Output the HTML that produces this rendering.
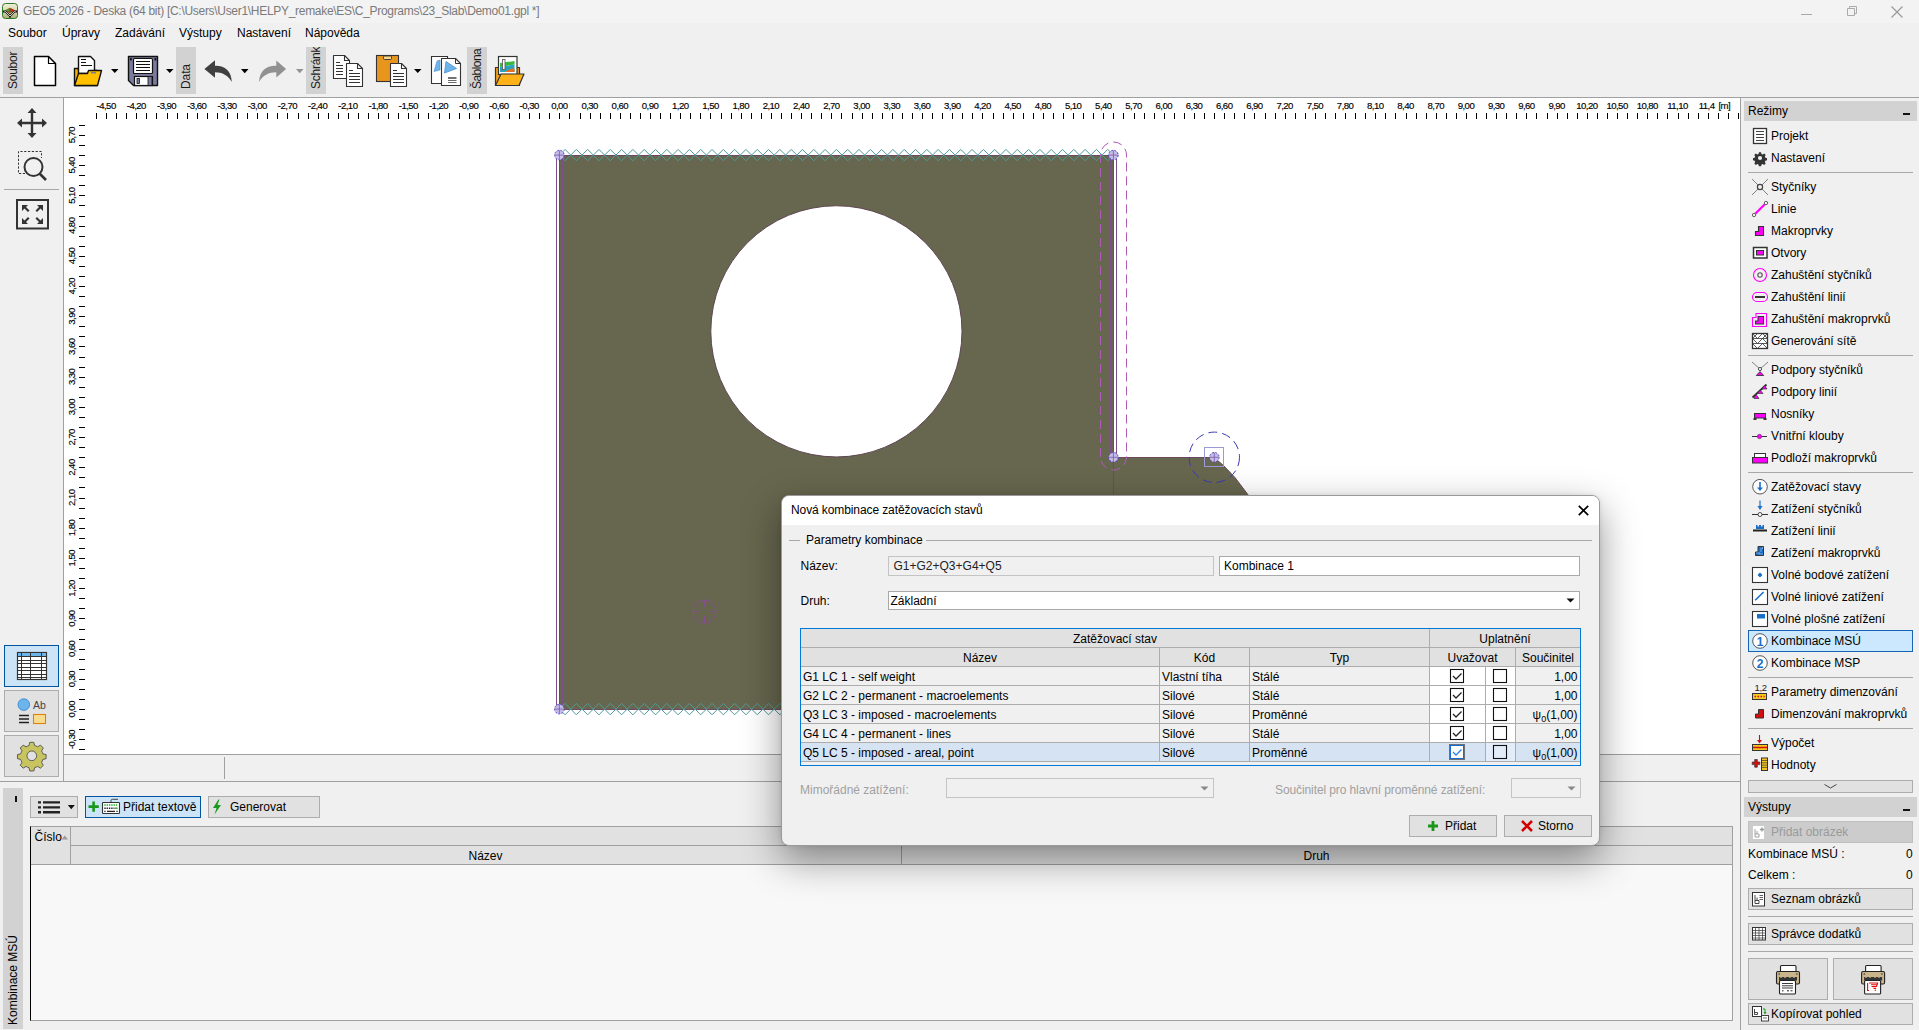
<!DOCTYPE html><html><head><meta charset="utf-8"><style>
*{box-sizing:border-box;margin:0;padding:0}
html,body{width:1919px;height:1030px;overflow:hidden;background:#f0f0f0;font-family:"Liberation Sans", sans-serif;font-size:12px;color:#000;position:relative}
.a{position:absolute}
.t{position:absolute;white-space:nowrap;line-height:14px}
.hl{position:absolute;height:1px;background:#a0a0a0}
.vl{position:absolute;width:1px;background:#a0a0a0}
svg{overflow:visible}
</style></head><body>
<div class="a" style="left:0;top:0;width:1919px;height:23px;background:#f3f3f3"></div>
<div class="t" style="left:23px;top:4px;color:#7a7a7a;letter-spacing:-0.3px">GEO5 2026 - Deska (64 bit) [C:\Users\User1\HELPY_remake\ES\C_Programs\23_Slab\Demo01.gpl *]</div>
<svg class="a" style="left:2px;top:3px" width="17" height="16" viewBox="0 0 17 16">
<defs><linearGradient id="ig" x1="0" y1="0" x2="0" y2="1"><stop offset="0" stop-color="#f0eed8"/><stop offset="0.5" stop-color="#d8d8b0"/><stop offset="1" stop-color="#a8b070"/></linearGradient></defs>
<rect x="0.5" y="0.5" width="15" height="15" rx="3" fill="url(#ig)" stroke="#2f7a2a" stroke-width="1"/>
<path d="M3 7.5L8 4.8L13 7.5L8 10.2Z" fill="#8a5020"/><path d="M3 7.5L6.5 5.6L7.5 8.5Z" fill="#5a9a30"/><path d="M13 7.5L9.5 5.6L9 8.8Z" fill="#d02020"/>
<path d="M1 8.5H3.5L8 13L12.5 8.5H15" fill="none" stroke="#111" stroke-width="1.8"/><path d="M2.5 8.5H3.5L8 13L12.5 8.5H13.5" fill="none" stroke="#fff" stroke-width="0.8"/>
<path d="M8 13V15" stroke="#111" stroke-width="1.2"/>
</svg>
<div class="a" style="left:1801px;top:14px;width:11px;height:1px;background:#aaa"></div>
<svg class="a" style="left:1846px;top:5px" width="12" height="12"><path d="M1.5 3.5h7v7h-7z M3.5 3.5v-2h7v7h-2" fill="none" stroke="#aaa"/></svg>
<svg class="a" style="left:1891px;top:6px" width="12" height="12"><path d="M0.5 0.5L11.5 11.5M11.5 0.5L0.5 11.5" stroke="#999" stroke-width="1.2"/></svg>
<div class="t" style="left:8px;top:26px">Soubor</div>
<div class="t" style="left:62px;top:26px">Úpravy</div>
<div class="t" style="left:115px;top:26px">Zadávání</div>
<div class="t" style="left:179px;top:26px">Výstupy</div>
<div class="t" style="left:237px;top:26px">Nastavení</div>
<div class="t" style="left:305px;top:26px">Nápověda</div>
<div class="a" style="left:3px;top:47px;width:20px;height:47px;background:#d2d2d2;overflow:hidden"><div class="t" style="left:2.8px;top:42px;transform-origin:0 0;transform:rotate(-90deg);color:#1a1a1a;letter-spacing:-0.25px">Soubor</div></div>
<div class="a" style="left:176px;top:47px;width:20px;height:47px;background:#d2d2d2;overflow:hidden"><div class="t" style="left:2.8px;top:42px;transform-origin:0 0;transform:rotate(-90deg);color:#1a1a1a;letter-spacing:-0.1px">Data</div></div>
<div class="a" style="left:306px;top:47px;width:20px;height:47px;background:#d2d2d2;overflow:hidden"><div class="t" style="left:2.8px;top:42px;transform-origin:0 0;transform:rotate(-90deg);color:#1a1a1a;letter-spacing:-0.25px">Schránk</div></div>
<div class="a" style="left:467px;top:47px;width:20px;height:47px;background:#d2d2d2;overflow:hidden"><div class="t" style="left:2.8px;top:42px;transform-origin:0 0;transform:rotate(-90deg);color:#1a1a1a;letter-spacing:-0.55px">Šablona</div></div>
<svg class="a" style="left:0;top:0" width="560" height="97">
<g stroke="#000" stroke-width="1.5" stroke-linejoin="round">
<path d="M34.5 56.5H48.5L55.5 63.5V85.5H34.5Z" fill="#fff"/>
<path d="M48.5 56.5V63.5H55.5" fill="none" stroke-width="1.2"/>
</g>
<g stroke="#111" stroke-width="1.4" stroke-linejoin="round">
<path d="M74.5 85.5V68.5H78.5V70.5H97V85.5Z" fill="#f4b400"/>
<path d="M78.5 73.5V56.5H90.5L94.5 60.5V73.5Z" fill="#fff"/>
</g>
<g stroke="#111" stroke-width="1.2"><path d="M81 59.5H86M81 62.5H86M81 65.5H92" /></g>
<path d="M74.5 85.5L78.5 73.5H87.5L88.5 70.5H101.5L97.5 85.5Z" fill="#ffc000" stroke="#111" stroke-width="1.4" stroke-linejoin="round"/>
<rect x="91" y="72" width="5" height="1.5" fill="#7b7b9e"/>
<path d="M111 69H118.5L114.75 73Z" fill="#000"/>
<path d="M128.5 56.5H157.5V85.5H133.5L128.5 80.5Z" fill="#7b7b9e" stroke="#111" stroke-width="1.4" stroke-linejoin="round"/>
<rect x="133.5" y="58.5" width="19" height="15" rx="1" fill="#fff" stroke="#111" stroke-width="1.2"/>
<path d="M136 61.5H150M136 64.5H150M136 67.5H150M136 70.5H150" stroke="#111" stroke-width="1"/>
<rect x="134.5" y="76.5" width="18" height="9" fill="#fff" stroke="#111" stroke-width="1.2"/>
<rect x="137" y="78.5" width="2.5" height="5" fill="#7b7b9e" stroke="#111" stroke-width="0.8"/>
<rect x="148" y="76.5" width="4" height="9" fill="#7b7b9e" stroke="#111" stroke-width="0.8"/>
<rect x="130" y="58" width="1.8" height="2.5" fill="#111"/><rect x="154.5" y="58" width="1.8" height="2.5" fill="#111"/>
<path d="M166 69H173.5L169.75 73Z" fill="#000"/>
<path d="M204.4 69L215 60.2V65.7C224 65.2 231.5 70 231.8 82.1C228.5 75.5 222 72.3 215 72.3V77.7Z" fill="#404040"/>
<path d="M241 69H248.5L244.75 73.2Z" fill="#000"/>
<path d="M286.1 69L276.3 60.5V65.7C267 65.2 259.4 70 259.1 82.1C262.4 75.5 269 72.3 276.3 72.3V77.5Z" fill="#919191"/>
<path d="M296 69H303.5L299.75 73.2Z" fill="#939393"/>
<g stroke="#333" stroke-width="1.1" stroke-linejoin="round">
<path d="M333.5 55.5H344.5L349.5 60.5V78.5H333.5Z" fill="#fff"/>
<path d="M344.5 55.5V60.5H349.5" fill="none"/>
</g>
<path d="M336 62.5H340M336 65.5H343M336 68.5H343M336 71.5H343M336 74.5H343" stroke="#333" stroke-width="1"/>
<g stroke="#333" stroke-width="1.1" stroke-linejoin="round">
<path d="M346.5 63.5H357.5L362.5 68.5V86.5H346.5Z" fill="#fff"/>
<path d="M357.5 63.5V68.5H362.5" fill="none"/>
</g>
<path d="M349 70.5H353M349 73.5H360M349 76.5H360M349 79.5H360M349 82.5H360" stroke="#333" stroke-width="1"/>
<rect x="376.5" y="55.5" width="22" height="26" fill="#e8951f" stroke="#333" stroke-width="1.1"/>
<rect x="383.5" y="56" width="8" height="3.5" rx="1" fill="#f8d888" stroke="#333" stroke-width="0.9"/>
<g stroke="#333" stroke-width="1.1" stroke-linejoin="round">
<path d="M390.5 63.5H401.5L406.5 68.5V86.5H390.5Z" fill="#fff"/>
<path d="M401.5 63.5V68.5H406.5" fill="none"/>
</g>
<path d="M393 70.5H397M393 73.5H404M393 76.5H404M393 79.5H404M393 82.5H404" stroke="#333" stroke-width="1"/>
<path d="M414 69H421.5L417.75 73Z" fill="#000"/>
<path d="M431.5 56.5H447.5V83.5H431.5Z" fill="#fff" stroke="#333" stroke-width="1.1"/>
<path d="M437 61L440 60V70L434 71.5Z" fill="#6cb4ec" stroke="#4a90d0" stroke-width="0.6"/>
<path d="M441.5 58.5H455.5L460.5 63.5V85.5H441.5Z" fill="#fff" stroke="#333" stroke-width="1.1" stroke-linejoin="round"/>
<path d="M455.5 58.5V63.5H460.5" fill="none" stroke="#333" stroke-width="1"/>
<path d="M446 61.5L456.5 68.5L444.5 73Z" fill="#6cb4ec" stroke="#4a90d0" stroke-width="0.8"/>
<path d="M448 78H456.5" stroke="#444" stroke-width="1.5"/><path d="M448 80.5H456.5M448 82.5H456.5" stroke="#444" stroke-width="0.8"/>
<path d="M495.5 85.5V67.5H519.5V85.5Z" fill="#f4a01a" stroke="#333" stroke-width="1.2" stroke-linejoin="round"/>
<rect x="498.5" y="56.5" width="18.5" height="18" fill="#fff" stroke="#333" stroke-width="1.2"/>
<path d="M500 63L514.5 61V64.5L500 67Z" fill="#3cb83c"/>
<path d="M500 67L514.5 64.5V72L500 72Z" fill="#26a4c0"/>
<path d="M505 72C508 69.5 511 68.5 514.5 68.5V72Z" fill="#e8701e"/>
<rect x="502.5" y="59.5" width="2.5" height="10" fill="#fff" stroke="#555" stroke-width="0.8"/>
<path d="M495.5 85.5L501 74H524L519 85.5Z" fill="#ffb11a" stroke="#333" stroke-width="1.2" stroke-linejoin="round"/>
</svg>
<div class="hl" style="left:0;top:97px;width:1919px"></div>
<div class="vl" style="left:63px;top:98px;height:684px"></div>
<div class="hl" style="left:0;top:781px;width:1741px"></div>
<div class="hl" style="left:64px;top:754px;width:1676px"></div>
<div class="vl" style="left:1740px;top:98px;height:932px"></div>
<svg class="a" style="left:0;top:98px" width="63" height="683" viewBox="0 98 63 683">
<g fill="#333">
<path d="M32 108L36.5 113H33.2V121.8H42V118.5L47 123L42 127.5V124.2H33.2V133H36.5L32 138L27.5 133H30.8V124.2H22V127.5L17 123L22 118.5V121.8H30.8V113H27.5Z"/>
</g>
<path d="M25 173.5H18.5V151.5H41.5V158" fill="none" stroke="#333" stroke-width="1" stroke-dasharray="2.2 1.6"/>
<circle cx="33.5" cy="167" r="9" fill="none" stroke="#333" stroke-width="2"/>
<path d="M39.5 173.5L46 180" stroke="#333" stroke-width="2.6"/>
<path d="M4 189.5H59" stroke="#a8a8a8" stroke-width="1"/>
<rect x="17" y="200" width="31" height="28.5" fill="none" stroke="#333" stroke-width="2"/>
<g fill="#333">
<path d="M22 205H28L26 207L29.5 210.5L28 212L24.5 208.5L22 211Z"/>
<path d="M43 205H37L39 207L35.5 210.5L37 212L40.5 208.5L43 211Z"/>
<path d="M22 224H28L26 222L29.5 218.5L28 217L24.5 220.5L22 218Z"/>
<path d="M43 224H37L39 222L35.5 218.5L37 217L40.5 220.5L43 218Z"/>
</g>
<rect x="4.5" y="645.5" width="54" height="41" fill="#cce4f7" stroke="#0055a0" stroke-width="1"/>
<rect x="4.5" y="690.5" width="54" height="41" fill="#e1e1e1" stroke="#adadad" stroke-width="1"/>
<rect x="4.5" y="735.5" width="54" height="41" fill="#e1e1e1" stroke="#adadad" stroke-width="1"/>
<rect x="17.5" y="652.5" width="29" height="27" fill="#fff" stroke="#333" stroke-width="1.2"/>
<rect x="18" y="653" width="28" height="3.5" fill="#6cb4ec"/>
<path d="M18 656.5H46M18 660.5H46M18 663.5H46M18 667.5H46M18 670.5H46M18 674.5H46M18 677.5H46M21.5 653V679M30.5 653V679M41.5 653V679" stroke="#333" stroke-width="1"/>
<circle cx="23.8" cy="704.6" r="5.8" fill="#6cb4ec" stroke="#3a88d0" stroke-width="0.9"/>
<text x="33" y="709" font-family="Liberation Sans" font-size="10.5" fill="#444">Ab</text>
<path d="M19 715.5H29M19 719H29M19 722.5H29" stroke="#222" stroke-width="1.5"/>
<rect x="33.5" y="714.5" width="12" height="9" fill="#f8dc90" stroke="#e08010" stroke-width="1.1"/>
<g transform="translate(31.8 755.8) scale(0.93)">
<path d="M-2.2 -14.5h4.4l0.8 3.5a11 11 0 0 1 3.2 1.4l3.1-1.9 3.1 3.1-1.9 3.1a11 11 0 0 1 1.4 3.2l3.5 0.8v4.4l-3.5 0.8a11 11 0 0 1-1.4 3.2l1.9 3.1-3.1 3.1-3.1-1.9a11 11 0 0 1-3.2 1.4l-0.8 3.5h-4.4l-0.8-3.5a11 11 0 0 1-3.2-1.4l-3.1 1.9-3.1-3.1 1.9-3.1a11 11 0 0 1-1.4-3.2l-3.5-0.8v-4.4l3.5-0.8a11 11 0 0 1 1.4-3.2l-1.9-3.1 3.1-3.1 3.1 1.9a11 11 0 0 1 3.2-1.4z" fill="#c8c460" stroke="#555" stroke-width="1"/>
<circle r="5.2" fill="#e1e1e1" stroke="#555" stroke-width="1"/>
</g>
</svg>
<div class="vl" style="left:224px;top:757px;height:22px"></div>
<div class="a" style="left:64px;top:98px;width:1676px;height:656px;background:#fff;overflow:hidden">
<svg class="a" style="left:-64px;top:-98px" width="1740" height="754">
<path d="M559.4 709.1H1113.41V155.09H559.4Z M710.81 331.36A125.6 125.6 0 1 0 962.01 331.36A125.6 125.6 0 1 0 710.81 331.36Z" fill="#67674f" fill-rule="evenodd"/>
<path d="M1113.41 457.3H1214.1L1224 466L1235.2 477.8L1248.2 495L1262 520L1270 560V709.1H1113.41Z" fill="#67674f"/>
<circle cx="836.41" cy="331.36" r="125.6" fill="none" stroke="#5e4552" stroke-width="1"/>
<path d="M559.4 155.5H1113.41M559.4 709.5H1300M559.5 155V709M1113.5 155V709M1113 457.5H1214.1" stroke="#6e4a62" stroke-width="1" fill="none"/>
<path d="M1214.1 457.3L1224 466L1235.2 477.8L1248.2 495L1262 520" stroke="#6e4a62" stroke-width="1" fill="none"/>
<path d="M556.5 155V709.5H562.5M562.5 155V709M1110.5 155V457M1116.5 155V457" stroke="#7e4d8c" stroke-width="1" fill="none"/>
<path d="M1100.5 457V155A13 13 0 0 1 1126.5 155V457A13 13 0 0 1 1100.5 457" stroke="#b05ab8" stroke-width="1" fill="none" stroke-dasharray="9 5"/>
<path d="M559.4 155.1L565.05 149.4L570.71 155.1L576.36 149.4L582.01 155.1L587.66 149.4L593.32 155.1L598.97 149.4L604.62 155.1L610.28 149.4L615.93 155.1L621.58 149.4L627.24 155.1L632.89 149.4L638.54 155.1L644.19 149.4L649.85 155.1L655.5 149.4L661.15 155.1L666.81 149.4L672.46 155.1L678.11 149.4L683.77 155.1L689.42 149.4L695.07 155.1L700.72 149.4L706.38 155.1L712.03 149.4L717.68 155.1L723.34 149.4L728.99 155.1L734.64 149.4L740.3 155.1L745.95 149.4L751.6 155.1L757.25 149.4L762.91 155.1L768.56 149.4L774.21 155.1L779.87 149.4L785.52 155.1L791.17 149.4L796.83 155.1L802.48 149.4L808.13 155.1L813.78 149.4L819.44 155.1L825.09 149.4L830.74 155.1L836.4 149.4L842.05 155.1L847.7 149.4L853.36 155.1L859.01 149.4L864.66 155.1L870.31 149.4L875.97 155.1L881.62 149.4L887.27 155.1L892.93 149.4L898.58 155.1L904.23 149.4L909.89 155.1L915.54 149.4L921.19 155.1L926.85 149.4L932.5 155.1L938.15 149.4L943.8 155.1L949.46 149.4L955.11 155.1L960.76 149.4L966.42 155.1L972.07 149.4L977.72 155.1L983.38 149.4L989.03 155.1L994.68 149.4L1000.33 155.1L1005.99 149.4L1011.64 155.1L1017.29 149.4L1022.95 155.1L1028.6 149.4L1034.25 155.1L1039.9 149.4L1045.56 155.1L1051.21 149.4L1056.86 155.1L1062.52 149.4L1068.17 155.1L1073.82 149.4L1079.48 155.1L1085.13 149.4L1090.78 155.1L1096.43 149.4L1102.09 155.1L1107.74 149.4L1113.39 155.1M559.4 155.1L565.05 160.8L570.71 155.1L576.36 160.8L582.01 155.1L587.66 160.8L593.32 155.1L598.97 160.8L604.62 155.1L610.28 160.8L615.93 155.1L621.58 160.8L627.24 155.1L632.89 160.8L638.54 155.1L644.19 160.8L649.85 155.1L655.5 160.8L661.15 155.1L666.81 160.8L672.46 155.1L678.11 160.8L683.77 155.1L689.42 160.8L695.07 155.1L700.72 160.8L706.38 155.1L712.03 160.8L717.68 155.1L723.34 160.8L728.99 155.1L734.64 160.8L740.3 155.1L745.95 160.8L751.6 155.1L757.25 160.8L762.91 155.1L768.56 160.8L774.21 155.1L779.87 160.8L785.52 155.1L791.17 160.8L796.83 155.1L802.48 160.8L808.13 155.1L813.78 160.8L819.44 155.1L825.09 160.8L830.74 155.1L836.4 160.8L842.05 155.1L847.7 160.8L853.36 155.1L859.01 160.8L864.66 155.1L870.31 160.8L875.97 155.1L881.62 160.8L887.27 155.1L892.93 160.8L898.58 155.1L904.23 160.8L909.89 155.1L915.54 160.8L921.19 155.1L926.85 160.8L932.5 155.1L938.15 160.8L943.8 155.1L949.46 160.8L955.11 155.1L960.76 160.8L966.42 155.1L972.07 160.8L977.72 155.1L983.38 160.8L989.03 155.1L994.68 160.8L1000.33 155.1L1005.99 160.8L1011.64 155.1L1017.29 160.8L1022.95 155.1L1028.6 160.8L1034.25 155.1L1039.9 160.8L1045.56 155.1L1051.21 160.8L1056.86 155.1L1062.52 160.8L1068.17 155.1L1073.82 160.8L1079.48 155.1L1085.13 160.8L1090.78 155.1L1096.43 160.8L1102.09 155.1L1107.74 160.8L1113.39 155.1" stroke="#4f9a9a" stroke-width="1" fill="none"/>
<path d="M559.4 709.1L565.05 703.4L570.71 709.1L576.36 703.4L582.01 709.1L587.66 703.4L593.32 709.1L598.97 703.4L604.62 709.1L610.28 703.4L615.93 709.1L621.58 703.4L627.24 709.1L632.89 703.4L638.54 709.1L644.19 703.4L649.85 709.1L655.5 703.4L661.15 709.1L666.81 703.4L672.46 709.1L678.11 703.4L683.77 709.1L689.42 703.4L695.07 709.1L700.72 703.4L706.38 709.1L712.03 703.4L717.68 709.1L723.34 703.4L728.99 709.1L734.64 703.4L740.3 709.1L745.95 703.4L751.6 709.1L757.25 703.4L762.91 709.1L768.56 703.4L774.21 709.1L779.87 703.4L785.52 709.1L791.17 703.4L796.83 709.1L802.48 703.4L808.13 709.1L813.78 703.4L819.44 709.1L825.09 703.4L830.74 709.1L836.4 703.4L842.05 709.1L847.7 703.4L853.36 709.1L859.01 703.4L864.66 709.1L870.31 703.4L875.97 709.1L881.62 703.4L887.27 709.1L892.93 703.4L898.58 709.1L904.23 703.4L909.89 709.1L915.54 703.4L921.19 709.1L926.85 703.4L932.5 709.1L938.15 703.4L943.8 709.1L949.46 703.4L955.11 709.1L960.76 703.4L966.42 709.1L972.07 703.4L977.72 709.1L983.38 703.4L989.03 709.1L994.68 703.4L1000.33 709.1L1005.99 703.4L1011.64 709.1L1017.29 703.4L1022.95 709.1L1028.6 703.4L1034.25 709.1L1039.9 703.4L1045.56 709.1L1051.21 703.4L1056.86 709.1L1062.52 703.4L1068.17 709.1L1073.82 703.4L1079.48 709.1L1085.13 703.4L1090.78 709.1L1096.43 703.4L1102.09 709.1L1107.74 703.4L1113.39 709.1L1119.05 703.4L1124.7 709.1L1130.35 703.4L1136.01 709.1L1141.66 703.4L1147.31 709.1L1152.96 703.4L1158.62 709.1L1164.27 703.4L1169.92 709.1L1175.58 703.4L1181.23 709.1L1186.88 703.4L1192.54 709.1L1198.19 703.4L1203.84 709.1L1209.49 703.4L1215.15 709.1L1220.8 703.4L1226.45 709.1L1232.11 703.4L1237.76 709.1L1243.41 703.4L1249.07 709.1L1254.72 703.4L1260.37 709.1L1266.03 703.4L1271.68 709.1L1277.33 703.4L1282.98 709.1L1288.64 703.4L1294.29 709.1M559.4 709.1L565.05 714.8L570.71 709.1L576.36 714.8L582.01 709.1L587.66 714.8L593.32 709.1L598.97 714.8L604.62 709.1L610.28 714.8L615.93 709.1L621.58 714.8L627.24 709.1L632.89 714.8L638.54 709.1L644.19 714.8L649.85 709.1L655.5 714.8L661.15 709.1L666.81 714.8L672.46 709.1L678.11 714.8L683.77 709.1L689.42 714.8L695.07 709.1L700.72 714.8L706.38 709.1L712.03 714.8L717.68 709.1L723.34 714.8L728.99 709.1L734.64 714.8L740.3 709.1L745.95 714.8L751.6 709.1L757.25 714.8L762.91 709.1L768.56 714.8L774.21 709.1L779.87 714.8L785.52 709.1L791.17 714.8L796.83 709.1L802.48 714.8L808.13 709.1L813.78 714.8L819.44 709.1L825.09 714.8L830.74 709.1L836.4 714.8L842.05 709.1L847.7 714.8L853.36 709.1L859.01 714.8L864.66 709.1L870.31 714.8L875.97 709.1L881.62 714.8L887.27 709.1L892.93 714.8L898.58 709.1L904.23 714.8L909.89 709.1L915.54 714.8L921.19 709.1L926.85 714.8L932.5 709.1L938.15 714.8L943.8 709.1L949.46 714.8L955.11 709.1L960.76 714.8L966.42 709.1L972.07 714.8L977.72 709.1L983.38 714.8L989.03 709.1L994.68 714.8L1000.33 709.1L1005.99 714.8L1011.64 709.1L1017.29 714.8L1022.95 709.1L1028.6 714.8L1034.25 709.1L1039.9 714.8L1045.56 709.1L1051.21 714.8L1056.86 709.1L1062.52 714.8L1068.17 709.1L1073.82 714.8L1079.48 709.1L1085.13 714.8L1090.78 709.1L1096.43 714.8L1102.09 709.1L1107.74 714.8L1113.39 709.1L1119.05 714.8L1124.7 709.1L1130.35 714.8L1136.01 709.1L1141.66 714.8L1147.31 709.1L1152.96 714.8L1158.62 709.1L1164.27 714.8L1169.92 709.1L1175.58 714.8L1181.23 709.1L1186.88 714.8L1192.54 709.1L1198.19 714.8L1203.84 709.1L1209.49 714.8L1215.15 709.1L1220.8 714.8L1226.45 709.1L1232.11 714.8L1237.76 709.1L1243.41 714.8L1249.07 709.1L1254.72 714.8L1260.37 709.1L1266.03 714.8L1271.68 709.1L1277.33 714.8L1282.98 709.1L1288.64 714.8L1294.29 709.1" stroke="#4f9a9a" stroke-width="1" fill="none"/>
<g stroke="#86508e" stroke-width="1" fill="none"><circle cx="704.5" cy="611.5" r="11.5"/><path d="M704.5 600V607M704.5 616V623M693 611.5H700M709 611.5H716"/></g>
<circle cx="1214.3" cy="457.3" r="25.2" fill="none" stroke="#3a3ab0" stroke-width="1" stroke-dasharray="9 5"/>
<rect x="1204.5" y="447.5" width="19" height="19" fill="none" stroke="#9a9ad8" stroke-width="1"/>
<circle cx="559.4" cy="155.1" r="4.8" fill="#c4bce6" stroke="#4e46c4" stroke-width="1" stroke-dasharray="2 1.3"/>
<path d="M554.9 155.1H563.9M559.4 150.6V159.6" stroke="#7a5aa8" stroke-width="0.8"/>
<circle cx="1113.41" cy="155.1" r="4.8" fill="#c4bce6" stroke="#4e46c4" stroke-width="1" stroke-dasharray="2 1.3"/>
<path d="M1108.91 155.1H1117.91M1113.41 150.6V159.6" stroke="#7a5aa8" stroke-width="0.8"/>
<circle cx="559.4" cy="709.1" r="4.8" fill="#c4bce6" stroke="#4e46c4" stroke-width="1" stroke-dasharray="2 1.3"/>
<path d="M554.9 709.1H563.9M559.4 704.6V713.6" stroke="#7a5aa8" stroke-width="0.8"/>
<circle cx="1113.41" cy="457.3" r="4.8" fill="#c4bce6" stroke="#4e46c4" stroke-width="1" stroke-dasharray="2 1.3"/>
<path d="M1108.91 457.3H1117.91M1113.41 452.8V461.8" stroke="#7a5aa8" stroke-width="0.8"/>
<circle cx="1214.3" cy="457.3" r="4.8" fill="#c4bce6" stroke="#4e46c4" stroke-width="1" stroke-dasharray="2 1.3"/>
<path d="M1209.8 457.3H1218.8M1214.3 452.8V461.8" stroke="#7a5aa8" stroke-width="0.8"/>
<path d="M96.5 113V119M106.5 113V119M116.5 113V119M126.5 113V119M136.5 113V119M146.5 113V119M156.5 113V119M167.5 113V119M177.5 113V119M187.5 113V119M197.5 113V119M207.5 113V119M217.5 113V119M227.5 113V119M237.5 113V119M247.5 113V119M257.5 113V119M267.5 113V119M277.5 113V119M287.5 113V119M298.5 113V119M308.5 113V119M318.5 113V119M328.5 113V119M338.5 113V119M348.5 113V119M358.5 113V119M368.5 113V119M378.5 113V119M388.5 113V119M398.5 113V119M408.5 113V119M418.5 113V119M428.5 113V119M439.5 113V119M449.5 113V119M459.5 113V119M469.5 113V119M479.5 113V119M489.5 113V119M499.5 113V119M509.5 113V119M519.5 113V119M529.5 113V119M539.5 113V119M549.5 113V119M559.5 113V119M569.5 113V119M580.5 113V119M590.5 113V119M600.5 113V119M610.5 113V119M620.5 113V119M630.5 113V119M640.5 113V119M650.5 113V119M660.5 113V119M670.5 113V119M680.5 113V119M690.5 113V119M700.5 113V119M710.5 113V119M721.5 113V119M731.5 113V119M741.5 113V119M751.5 113V119M761.5 113V119M771.5 113V119M781.5 113V119M791.5 113V119M801.5 113V119M811.5 113V119M821.5 113V119M831.5 113V119M841.5 113V119M852.5 113V119M862.5 113V119M872.5 113V119M882.5 113V119M892.5 113V119M902.5 113V119M912.5 113V119M922.5 113V119M932.5 113V119M942.5 113V119M952.5 113V119M962.5 113V119M972.5 113V119M982.5 113V119M993.5 113V119M1003.5 113V119M1013.5 113V119M1023.5 113V119M1033.5 113V119M1043.5 113V119M1053.5 113V119M1063.5 113V119M1073.5 113V119M1083.5 113V119M1093.5 113V119M1103.5 113V119M1113.5 113V119M1123.5 113V119M1134.5 113V119M1144.5 113V119M1154.5 113V119M1164.5 113V119M1174.5 113V119M1184.5 113V119M1194.5 113V119M1204.5 113V119M1214.5 113V119M1224.5 113V119M1234.5 113V119M1244.5 113V119M1254.5 113V119M1265.5 113V119M1275.5 113V119M1285.5 113V119M1295.5 113V119M1305.5 113V119M1315.5 113V119M1325.5 113V119M1335.5 113V119M1345.5 113V119M1355.5 113V119M1365.5 113V119M1375.5 113V119M1385.5 113V119M1395.5 113V119M1406.5 113V119M1416.5 113V119M1426.5 113V119M1436.5 113V119M1446.5 113V119M1456.5 113V119M1466.5 113V119M1476.5 113V119M1486.5 113V119M1496.5 113V119M1506.5 113V119M1516.5 113V119M1526.5 113V119M1536.5 113V119M1547.5 113V119M1557.5 113V119M1567.5 113V119M1577.5 113V119M1587.5 113V119M1597.5 113V119M1607.5 113V119M1617.5 113V119M1627.5 113V119M1637.5 113V119M1647.5 113V119M1657.5 113V119M1667.5 113V119M1678.5 113V119M1688.5 113V119M1698.5 113V119M1708.5 113V119M1718.5 113V119M1728.5 113V119M1738.5 113V119M79 749.5H85M79 739.5H85M79 729.5H85M79 719.5H85M79 709.5H85M79 699.5H85M79 689.5H85M79 679.5H85M79 669.5H85M79 659.5H85M79 649.5H85M79 639.5H85M79 629.5H85M79 618.5H85M79 608.5H85M79 598.5H85M79 588.5H85M79 578.5H85M79 568.5H85M79 558.5H85M79 548.5H85M79 538.5H85M79 528.5H85M79 518.5H85M79 508.5H85M79 498.5H85M79 487.5H85M79 477.5H85M79 467.5H85M79 457.5H85M79 447.5H85M79 437.5H85M79 427.5H85M79 417.5H85M79 407.5H85M79 397.5H85M79 387.5H85M79 377.5H85M79 367.5H85M79 357.5H85M79 346.5H85M79 336.5H85M79 326.5H85M79 316.5H85M79 306.5H85M79 296.5H85M79 286.5H85M79 276.5H85M79 266.5H85M79 256.5H85M79 246.5H85M79 236.5H85M79 226.5H85M79 216.5H85M79 205.5H85M79 195.5H85M79 185.5H85M79 175.5H85M79 165.5H85M79 155.5H85M79 145.5H85M79 135.5H85M79 125.5H85" stroke="#000" stroke-width="1"/>
<g font-family="Liberation Sans" font-size="9.6" letter-spacing="-0.55" fill="#000" stroke="#000" stroke-width="0.15"><text x="106.11" y="109" text-anchor="middle">-4,50</text><text x="136.33" y="109" text-anchor="middle">-4,20</text><text x="166.55" y="109" text-anchor="middle">-3,90</text><text x="196.77" y="109" text-anchor="middle">-3,60</text><text x="226.99" y="109" text-anchor="middle">-3,30</text><text x="257.21" y="109" text-anchor="middle">-3,00</text><text x="287.43" y="109" text-anchor="middle">-2,70</text><text x="317.65" y="109" text-anchor="middle">-2,40</text><text x="347.87" y="109" text-anchor="middle">-2,10</text><text x="378.09" y="109" text-anchor="middle">-1,80</text><text x="408.3" y="109" text-anchor="middle">-1,50</text><text x="438.52" y="109" text-anchor="middle">-1,20</text><text x="468.74" y="109" text-anchor="middle">-0,90</text><text x="498.96" y="109" text-anchor="middle">-0,60</text><text x="529.18" y="109" text-anchor="middle">-0,30</text><text x="559.4" y="109" text-anchor="middle">0,00</text><text x="589.62" y="109" text-anchor="middle">0,30</text><text x="619.84" y="109" text-anchor="middle">0,60</text><text x="650.06" y="109" text-anchor="middle">0,90</text><text x="680.28" y="109" text-anchor="middle">1,20</text><text x="710.5" y="109" text-anchor="middle">1,50</text><text x="740.71" y="109" text-anchor="middle">1,80</text><text x="770.93" y="109" text-anchor="middle">2,10</text><text x="801.15" y="109" text-anchor="middle">2,40</text><text x="831.37" y="109" text-anchor="middle">2,70</text><text x="861.59" y="109" text-anchor="middle">3,00</text><text x="891.81" y="109" text-anchor="middle">3,30</text><text x="922.03" y="109" text-anchor="middle">3,60</text><text x="952.25" y="109" text-anchor="middle">3,90</text><text x="982.47" y="109" text-anchor="middle">4,20</text><text x="1012.68" y="109" text-anchor="middle">4,50</text><text x="1042.9" y="109" text-anchor="middle">4,80</text><text x="1073.12" y="109" text-anchor="middle">5,10</text><text x="1103.34" y="109" text-anchor="middle">5,40</text><text x="1133.56" y="109" text-anchor="middle">5,70</text><text x="1163.78" y="109" text-anchor="middle">6,00</text><text x="1194" y="109" text-anchor="middle">6,30</text><text x="1224.22" y="109" text-anchor="middle">6,60</text><text x="1254.44" y="109" text-anchor="middle">6,90</text><text x="1284.66" y="109" text-anchor="middle">7,20</text><text x="1314.88" y="109" text-anchor="middle">7,50</text><text x="1345.09" y="109" text-anchor="middle">7,80</text><text x="1375.31" y="109" text-anchor="middle">8,10</text><text x="1405.53" y="109" text-anchor="middle">8,40</text><text x="1435.75" y="109" text-anchor="middle">8,70</text><text x="1465.97" y="109" text-anchor="middle">9,00</text><text x="1496.19" y="109" text-anchor="middle">9,30</text><text x="1526.41" y="109" text-anchor="middle">9,60</text><text x="1556.63" y="109" text-anchor="middle">9,90</text><text x="1586.85" y="109" text-anchor="middle">10,20</text><text x="1617.07" y="109" text-anchor="middle">10,50</text><text x="1647.28" y="109" text-anchor="middle">10,80</text><text x="1677.5" y="109" text-anchor="middle">11,10</text><text x="1698.72" y="109" text-anchor="start">11,4</text><text x="1718.5" y="109">[m]</text><text transform="translate(75.2 739.52) rotate(-90)" text-anchor="middle">-0,30</text><text transform="translate(75.2 709.3) rotate(-90)" text-anchor="middle">0,00</text><text transform="translate(75.2 679.08) rotate(-90)" text-anchor="middle">0,30</text><text transform="translate(75.2 648.86) rotate(-90)" text-anchor="middle">0,60</text><text transform="translate(75.2 618.64) rotate(-90)" text-anchor="middle">0,90</text><text transform="translate(75.2 588.42) rotate(-90)" text-anchor="middle">1,20</text><text transform="translate(75.2 558.21) rotate(-90)" text-anchor="middle">1,50</text><text transform="translate(75.2 527.99) rotate(-90)" text-anchor="middle">1,80</text><text transform="translate(75.2 497.77) rotate(-90)" text-anchor="middle">2,10</text><text transform="translate(75.2 467.55) rotate(-90)" text-anchor="middle">2,40</text><text transform="translate(75.2 437.33) rotate(-90)" text-anchor="middle">2,70</text><text transform="translate(75.2 407.11) rotate(-90)" text-anchor="middle">3,00</text><text transform="translate(75.2 376.89) rotate(-90)" text-anchor="middle">3,30</text><text transform="translate(75.2 346.67) rotate(-90)" text-anchor="middle">3,60</text><text transform="translate(75.2 316.45) rotate(-90)" text-anchor="middle">3,90</text><text transform="translate(75.2 286.23) rotate(-90)" text-anchor="middle">4,20</text><text transform="translate(75.2 256.01) rotate(-90)" text-anchor="middle">4,50</text><text transform="translate(75.2 225.8) rotate(-90)" text-anchor="middle">4,80</text><text transform="translate(75.2 195.58) rotate(-90)" text-anchor="middle">5,10</text><text transform="translate(75.2 165.36) rotate(-90)" text-anchor="middle">5,40</text><text transform="translate(75.2 135.14) rotate(-90)" text-anchor="middle">5,70</text></g>
</svg></div>
<div class="a" style="left:3px;top:788px;width:20px;height:241px;background:#d2d2d2"></div>
<div class="a" style="left:15px;top:796px;width:2px;height:6px;background:#111"></div>
<div class="t" style="left:5.8px;top:1025px;transform-origin:0 0;transform:rotate(-90deg)">Kombinace MSÚ</div>
<div class="a" style="left:30px;top:796px;width:48px;height:22px;background:#e1e1e1;border:1px solid #adadad"></div>
<div class="a" style="left:85px;top:796px;width:116px;height:22px;background:#cce4f7;border:1px solid #0055a0"></div>
<div class="a" style="left:208px;top:796px;width:112px;height:22px;background:#e1e1e1;border:1px solid #adadad"></div>
<div class="t" style="left:123px;top:800px">Přidat textově</div>
<div class="t" style="left:230px;top:800px">Generovat</div>
<svg class="a" style="left:0;top:0" width="400" height="880">
<path d="M38 802.4H41M38 807.4H41M38 812.3H41" stroke="#222" stroke-width="2.4"/>
<path d="M43 802.4H60M43 807.4H60M43 812.3H60" stroke="#222" stroke-width="2.4"/>
<path d="M67.8 805H74.8L71.3 809.2Z" fill="#111"/>
<path d="M88.5 806.6H98.8M93.6 801.4V811.8" stroke="#1a961a" stroke-width="2.6"/>
<rect x="102.5" y="802.5" width="17" height="11" rx="0.8" fill="#fff" stroke="#333" stroke-width="1.1"/>
<path d="M111 802.5V800.5C111 799.7 111.5 799.3 112.5 799.3H118" fill="none" stroke="#333" stroke-width="0.9"/>
<path d="M104.3 805H117.7" stroke="#22aa22" stroke-width="1.4" stroke-dasharray="1.4 0.9"/>
<path d="M104.3 808.2H114.5" stroke="#222" stroke-width="1.4" stroke-dasharray="1.4 0.9"/><path d="M115 808.2H117.7" stroke="#22aa22" stroke-width="1.4"/>
<path d="M104.3 811.3H105.6M107 811.3H115M116.4 811.3H117.7" stroke="#222" stroke-width="1.3"/>
<path d="M218.5 799.5L213 808H216.5L214.5 814.5L221 805H217.5L219.5 799.5Z" fill="#1a9a1a"/>
</svg>
<div class="a" style="left:30px;top:826px;width:1703px;height:195px;background:#f8f8f8;border-top:1px solid #a0a0a0;border-right:1px solid #a0a0a0;border-bottom:1px solid #a0a0a0;border-left:1px solid #000"></div>
<div class="a" style="left:31px;top:827px;width:1701px;height:37px;background:#e1e1e1"></div>
<div class="hl" style="left:31px;top:864px;width:1701px"></div>
<div class="hl" style="left:70px;top:845px;width:1662px"></div>
<div class="vl" style="left:70px;top:827px;height:37px"></div>
<div class="vl" style="left:901px;top:846px;height:18px"></div>
<div class="t" style="left:34.5px;top:829.5px">Číslo</div>
<svg class="a" style="left:61px;top:835px" width="8" height="5"><path d="M0.5 4.5L3.75 0.5L7 4.5Z" fill="#9a9a9a"/></svg>
<div class="t" style="left:70px;width:831px;top:848.5px;text-align:center">Název</div>
<div class="t" style="left:901px;width:831px;top:848.5px;text-align:center">Druh</div>
<div class="a" style="left:1744px;top:101px;width:173px;height:20px;background:#d2d2d2"></div>
<div class="t" style="left:1748px;top:104px">Režimy</div>
<div class="a" style="left:1903px;top:113px;width:7px;height:2px;background:#111"></div>
<div class="a" style="left:1744px;top:797px;width:173px;height:20px;background:#d2d2d2"></div>
<div class="t" style="left:1748px;top:800px">Výstupy</div>
<div class="a" style="left:1903px;top:809px;width:7px;height:2px;background:#111"></div>
<div class="a" style="left:1748px;top:630px;width:165px;height:22px;background:#cce8ff;border:1px solid #1664b4"></div>
<div class="t" style="left:1771px;top:129px">Projekt</div>
<div class="t" style="left:1771px;top:151px">Nastavení</div>
<div class="t" style="left:1771px;top:180px">Styčníky</div>
<div class="t" style="left:1771px;top:202px">Linie</div>
<div class="t" style="left:1771px;top:224px">Makroprvky</div>
<div class="t" style="left:1771px;top:246px">Otvory</div>
<div class="t" style="left:1771px;top:268px">Zahuštění styčníků</div>
<div class="t" style="left:1771px;top:290px">Zahuštění linií</div>
<div class="t" style="left:1771px;top:312px">Zahuštění makroprvků</div>
<div class="t" style="left:1771px;top:334px">Generování sítě</div>
<div class="t" style="left:1771px;top:363px">Podpory styčníků</div>
<div class="t" style="left:1771px;top:385px">Podpory linií</div>
<div class="t" style="left:1771px;top:407px">Nosníky</div>
<div class="t" style="left:1771px;top:429px">Vnitřní klouby</div>
<div class="t" style="left:1771px;top:451px">Podloží makroprvků</div>
<div class="t" style="left:1771px;top:480px">Zatěžovací stavy</div>
<div class="t" style="left:1771px;top:502px">Zatížení styčníků</div>
<div class="t" style="left:1771px;top:524px">Zatížení linií</div>
<div class="t" style="left:1771px;top:546px">Zatížení makroprvků</div>
<div class="t" style="left:1771px;top:568px">Volné bodové zatížení</div>
<div class="t" style="left:1771px;top:590px">Volné liniové zatížení</div>
<div class="t" style="left:1771px;top:612px">Volné plošné zatížení</div>
<div class="t" style="left:1771px;top:634px">Kombinace MSÚ</div>
<div class="t" style="left:1771px;top:656px">Kombinace MSP</div>
<div class="t" style="left:1771px;top:685px">Parametry dimenzování</div>
<div class="t" style="left:1771px;top:707px">Dimenzování makroprvků</div>
<div class="t" style="left:1771px;top:736px">Výpočet</div>
<div class="t" style="left:1771px;top:758px">Hodnoty</div>
<div class="a" style="left:1748px;top:172px;width:165px;height:1px;background:#a8a8a8"></div>
<div class="a" style="left:1748px;top:355px;width:165px;height:1px;background:#a8a8a8"></div>
<div class="a" style="left:1748px;top:472px;width:165px;height:1px;background:#a8a8a8"></div>
<div class="a" style="left:1748px;top:677px;width:165px;height:1px;background:#a8a8a8"></div>
<div class="a" style="left:1748px;top:728px;width:165px;height:1px;background:#a8a8a8"></div>
<svg class="a" style="left:0;top:0" width="1919" height="1030">
<rect x="1753.5" y="128.5" width="13" height="15" fill="#fff" stroke="#333" stroke-width="1.3"/>
<path d="M1756 131.5H1764M1756 134.5H1764M1756 137.5H1764M1756 140.5H1764" stroke="#444" stroke-width="1"/>
<g transform="translate(1760 158) scale(0.8)"><path d="M-1.3-7.2h2.6l0.5 2.1a5 5 0 0 1 1.6 0.7l1.9-1.1 1.8 1.8-1.1 1.9a5 5 0 0 1 0.7 1.6l2.1 0.5v2.6l-2.1 0.5a5 5 0 0 1-0.7 1.6l1.1 1.9-1.8 1.8-1.9-1.1a5 5 0 0 1-1.6 0.7l-0.5 2.1h-2.6l-0.5-2.1a5 5 0 0 1-1.6-0.7l-1.9 1.1-1.8-1.8 1.1-1.9a5 5 0 0 1-0.7-1.6l-2.1-0.5v-2.6l2.1-0.5a5 5 0 0 1 0.7-1.6l-1.1-1.9 1.8-1.8 1.9 1.1a5 5 0 0 1 1.6-0.7z" fill="#333"/><circle r="2.6" fill="#f0f0f0"/></g>
<path d="M1752 179L1768 195M1768 179L1752 195" stroke="#666" stroke-width="0.8"/><circle cx="1760" cy="187" r="2.6" fill="#f0f0f0" stroke="#444" stroke-width="1.2"/>
<path d="M1755.3 213.7L1764.8 204.3" stroke="#ff00ff" stroke-width="2.2"/><circle cx="1754" cy="215" r="1.7" fill="#f0f0f0" stroke="#555" stroke-width="0.9"/><circle cx="1766" cy="203" r="1.7" fill="#f0f0f0" stroke="#555" stroke-width="0.9"/>
<path d="M1755.5 231.5H1758.5V226.5H1763.5V235.5H1755.5Z" fill="#ff00ff" stroke="#333" stroke-width="1.1"/>
<rect x="1753.5" y="247.5" width="13.5" height="10.5" fill="#fff" stroke="#333" stroke-width="1.5"/><rect x="1756.5" y="250.5" width="7" height="4.5" fill="#ff00ff" stroke="#333" stroke-width="1"/>
<circle cx="1760" cy="275" r="6.5" fill="none" stroke="#ff00ff" stroke-width="1.1"/><circle cx="1760" cy="275" r="2.2" fill="none" stroke="#555" stroke-width="1.1"/>
<rect x="1752.5" y="292.5" width="15" height="9" rx="4.5" fill="none" stroke="#ff00ff" stroke-width="1.1"/><path d="M1755 297H1765" stroke="#333" stroke-width="2"/>
<path d="M1752.5 317.5H1756V313.5H1766.5V326.5H1752.5Z" fill="none" stroke="#ff00ff" stroke-width="1.1"/><path d="M1755.5 321H1758V316.5H1763.5V324H1755.5Z" fill="#ff00ff" stroke="#333" stroke-width="1.1"/>
<rect x="1752.5" y="333.5" width="15" height="15" fill="#fff" stroke="#333" stroke-width="1.3"/>
<path d="M1752.5 338.5H1767.5M1752.5 343.5H1767.5M1752.5 333.5L1757.5 338.5L1762.5 333.5L1767.5 338.5M1752.5 338.5L1757.5 343.5L1762.5 338.5L1767.5 343.5M1752.5 343.5L1757.5 348.5L1762.5 343.5L1767.5 348.5M1752.5 338.5L1757.5 333.5M1762.5 338.5L1767.5 333.5" stroke="#333" stroke-width="0.8" fill="none"/>
<path d="M1752 362L1760 369L1768 362" stroke="#666" stroke-width="0.8" fill="none"/><circle cx="1760" cy="369" r="1.6" fill="#f0f0f0" stroke="#444" stroke-width="0.9"/><path d="M1756.3 375.5L1760 371.5L1763.7 375.5Z" fill="#ff00ff" stroke="#333" stroke-width="0.9"/>
<path d="M1752.5 397.5L1766.5 384.5" stroke="#333" stroke-width="1.8"/><path d="M1754 398.5L1756 394.5L1759 398.5ZM1757.5 393.5L1760 390L1763 393.5ZM1762 389L1764.5 385.5L1767 389Z" fill="#ff00ff" stroke="#333" stroke-width="0.7"/>
<rect x="1754.5" y="413.5" width="11" height="4.5" fill="#ff00ff" stroke="#333" stroke-width="1"/><path d="M1753.5 419H1756.5M1763.5 419H1766.5" stroke="#333" stroke-width="2"/>
<path d="M1752 436.5H1767" stroke="#333" stroke-width="1"/><circle cx="1759.5" cy="436.5" r="2.2" fill="#ff00ff" stroke="#444" stroke-width="0.6"/>
<rect x="1754.5" y="453.5" width="11" height="4" fill="#fff" stroke="#333" stroke-width="1"/><rect x="1752.5" y="457.5" width="15" height="5.5" fill="#ff00ff" stroke="#333" stroke-width="1"/>
<circle cx="1760" cy="486.7" r="7.3" fill="#fff" stroke="#444" stroke-width="0.9"/><path d="M1760 482V489" stroke="#1a6ec8" stroke-width="1.6"/><path d="M1757 487.5L1760 491L1763 487.5Z" fill="#1a6ec8"/>
<path d="M1760 500.5V508" stroke="#1a6ec8" stroke-width="1.2"/><path d="M1757.5 506L1760 510L1762.5 506Z" fill="#1a6ec8"/><path d="M1752 514.5H1768" stroke="#333" stroke-width="1"/><circle cx="1760" cy="514.5" r="2" fill="#fff" stroke="#333" stroke-width="0.9"/>
<path d="M1756 529V525H1757.5V526.5H1759V525H1761V526.5H1762.5V525H1764V529Z" fill="#1a6ec8"/><path d="M1753 530.5H1767" stroke="#222" stroke-width="2"/>
<path d="M1755.5 552H1758V546.5H1763.5V555.5H1755.5Z" fill="#1a6ec8" stroke="#333" stroke-width="1"/><path d="M1756.5 553h1M1758.5 553h1M1760.5 551h1M1760.5 549h1M1762 548h1M1759.5 554h1M1761.5 554h1" stroke="#fff" stroke-width="0.8"/>
<rect x="1752.5" y="567.5" width="15" height="15" fill="#fff" stroke="#333" stroke-width="1.1"/><path d="M1760 572.5L1762.5 575L1760 577.5L1757.5 575Z" fill="#1a6ec8"/>
<rect x="1752.5" y="589.5" width="15" height="15" fill="#fff" stroke="#333" stroke-width="1.1"/><path d="M1755.2 600.2L1763.6 592" stroke="#1a6ec8" stroke-width="1.6"/>
<rect x="1752.5" y="611.5" width="15" height="15" fill="#fff" stroke="#333" stroke-width="1.1"/><rect x="1757" y="614" width="8" height="4.5" fill="#1a6ec8"/>
<circle cx="1760" cy="641" r="7.3" fill="#fff" stroke="#444" stroke-width="0.9"/><text x="1760" y="645.5" text-anchor="middle" font-family="Liberation Sans" font-size="12" font-weight="bold" fill="#1a6ec8">1</text>
<circle cx="1760" cy="663" r="7.3" fill="#fff" stroke="#444" stroke-width="0.9"/><text x="1760" y="667.5" text-anchor="middle" font-family="Liberation Sans" font-size="12" font-weight="bold" fill="#1a6ec8">2</text>
<text x="1754.5" y="691.3" font-family="Liberation Sans" font-size="9.5" fill="#222" letter-spacing="-0.3">1,2</text>
<rect x="1752.5" y="693.5" width="14" height="6" fill="#f8c820" stroke="#333" stroke-width="1"/><path d="M1754.5 696.5h1.5M1757.5 696.5h1.5M1760.5 696.5h1.5M1763.5 696.5h1.2" stroke="#d01010" stroke-width="1.5"/>
<path d="M1755.5 714H1758.5V709.5H1763.5V718H1755.5Z" fill="#d40e0e" stroke="#333" stroke-width="1"/>
<path d="M1759.5 735V742" stroke="#d01010" stroke-width="1.1"/><path d="M1757 740L1759.5 743.5L1762 740Z" fill="#d01010"/>
<rect x="1752.5" y="744.5" width="15" height="6" fill="#f8c820" stroke="#333" stroke-width="1"/><path d="M1753 747.5H1767" stroke="#d01010" stroke-width="1.5"/>
<path d="M1754.7 759.5H1757.3V762H1759.8V764.6H1757.3V767.2H1754.7V764.6H1752.2V762H1754.7Z" fill="#d40e0e" stroke="#333" stroke-width="0.7"/>
<rect x="1761.5" y="758" width="6" height="12.5" fill="#f8c820" stroke="#333" stroke-width="1"/><path d="M1762 760.5H1767M1762 762.8H1767M1762 765.1H1767M1762 767.4H1767" stroke="#333" stroke-width="0.7"/>
</svg>
<div class="a" style="left:1748px;top:780px;width:165px;height:13px;background:#e1e1e1;border:1px solid #adadad"></div>
<svg class="a" style="left:1824px;top:784px" width="13" height="6"><path d="M0.5 0.5L6.5 4L12.5 0.5" fill="none" stroke="#444" stroke-width="1"/></svg>
<div class="a" style="left:1748px;top:821px;width:165px;height:22px;background:#cccccc;border:1px solid #bfbfbf"></div>
<div class="t" style="left:1771px;top:825px;color:#9a9a9a">Přidat obrázek</div>
<div class="t" style="left:1748px;top:847px">Kombinace MSÚ :</div>
<div class="t" style="left:1906px;top:847px">0</div>
<div class="t" style="left:1748px;top:868px">Celkem :</div>
<div class="t" style="left:1906px;top:868px">0</div>
<div class="a" style="left:1748px;top:888px;width:165px;height:22px;background:#e1e1e1;border:1px solid #adadad"></div>
<div class="t" style="left:1771px;top:892px">Seznam obrázků</div>
<div class="a" style="left:1748px;top:923px;width:165px;height:22px;background:#e1e1e1;border:1px solid #adadad"></div>
<div class="t" style="left:1771px;top:927px">Správce dodatků</div>
<div class="a" style="left:1748px;top:1003px;width:165px;height:22px;background:#e1e1e1;border:1px solid #adadad"></div>
<div class="t" style="left:1771px;top:1007px">Kopírovat pohled</div>
<div class="a" style="left:1748px;top:916px;width:165px;height:1px;background:#a8a8a8"></div>
<div class="a" style="left:1748px;top:951px;width:165px;height:1px;background:#a8a8a8"></div>
<div class="a" style="left:1748px;top:958px;width:80px;height:42px;background:#e1e1e1;border:1px solid #adadad"></div>
<div class="a" style="left:1833px;top:958px;width:80px;height:42px;background:#e1e1e1;border:1px solid #adadad"></div>
<svg class="a" style="left:0;top:0" width="1919" height="1030">
<rect x="1752.5" y="825.5" width="12" height="14" fill="#fff" stroke="#ccc"/>
<path d="M1755 829V837H1759V834H1755M1757 831V834" stroke="#999" fill="none" stroke-width="0.9"/><path d="M1760 829.5H1764M1762 827.5V831.5" stroke="#999" stroke-width="1.3"/>
<rect x="1752.5" y="892.5" width="12" height="13.5" fill="#fff" stroke="#333"/>
<path d="M1755 895V903.5H1759V900.5H1755M1757 897.5V900.5" stroke="#333" fill="none" stroke-width="0.9"/><path d="M1759.5 895.5H1763M1759.5 897.5H1763M1759.5 899.5H1763" stroke="#333" stroke-width="0.8"/>
<rect x="1752.5" y="927.5" width="13" height="12.5" fill="#fff" stroke="#333"/>
<path d="M1752.5 930.5H1765.5M1752.5 933H1765.5M1752.5 935.5H1765.5M1752.5 938H1765.5M1755.5 928V940M1759 928V940M1762.5 928V940" stroke="#333" stroke-width="0.7"/>
<g id="pr" stroke="#222" stroke-width="1.1">
<rect x="1780.5" y="965.5" width="15.5" height="7" rx="1" fill="#fff"/>
<rect x="1776.5" y="971.5" width="23" height="12.5" rx="1.5" fill="#c9b48c"/>
<rect x="1779" y="977" width="18" height="3.5" fill="#333" stroke="none"/>
<path d="M1780 977.2h2M1784 977.2h2M1789 977.2h2M1793 977.2h2" stroke="#c9b48c" stroke-width="1"/>
<path d="M1778.5 974h1.5M1796 974h1.5" stroke="#222" stroke-width="1"/>
<rect x="1779.5" y="980.5" width="16" height="13.5" rx="1" fill="#fff"/>
</g>
<path d="M1782 983.5H1793M1782 985.8H1793M1782 988H1793" stroke="#222" stroke-width="0.9"/><path d="M1782 990.8h1.5M1787 990.8h2M1790.5 990.8h2M1784 986h0" stroke="#222" stroke-width="1"/>

<g transform="translate(85.1 0)" stroke="#222" stroke-width="1.1">
<rect x="1780.5" y="965.5" width="15.5" height="7" rx="1" fill="#fff"/>
<rect x="1776.5" y="971.5" width="23" height="12.5" rx="1.5" fill="#c9b48c"/>
<rect x="1779" y="977" width="18" height="3.5" fill="#333" stroke="none"/>
<path d="M1780 977.2h2M1784 977.2h2M1789 977.2h2M1793 977.2h2" stroke="#c9b48c" stroke-width="1"/>
<path d="M1778.5 974h1.5M1796 974h1.5" stroke="#222" stroke-width="1"/>
<rect x="1779.5" y="980.5" width="16" height="13.5" rx="1" fill="#fff"/>
<path d="M1782.5 983V990.5H1784M1784 983H1792.5L1791.5 986.5H1786.5M1786 984.8H1791.5M1787.5 986.8H1791M1788.5 988.5H1791M1789.5 990.3H1791" stroke="#e01010" stroke-width="1.1" fill="none"/>
</g>
<rect x="1752.5" y="1006.5" width="9" height="10" fill="#fff" stroke="#333"/>
<path d="M1754.5 1009V1014.5H1757.5V1012.5H1754.5" stroke="#333" fill="none" stroke-width="0.9"/>
<path d="M1763 1009H1765V1013" stroke="#1aa01a" stroke-width="1" fill="none"/><path d="M1763.5 1012L1765 1014.5L1766.5 1012Z" fill="#1aa01a"/>
<rect x="1761.5" y="1015.5" width="7" height="5.5" fill="#fff" stroke="#333" stroke-width="0.9"/><path d="M1763 1018H1767" stroke="#333" stroke-width="0.7"/>
</svg>
<div class="a" style="left:781px;top:495px;width:819px;height:351px;border-radius:8px;background:#f0f0f0;border:1px solid #9a9a9a;box-shadow:0 14px 38px rgba(0,0,0,0.42),0 0 4px rgba(0,0,0,0.1);overflow:hidden">
<div class="a" style="left:0;top:0;width:817px;height:29px;background:#fff"></div>
</div>
<div class="t" style="left:791px;top:502.5px;letter-spacing:-0.1px">Nová kombinace zatěžovacích stavů</div>
<svg class="a" style="left:1578px;top:505px" width="11" height="11"><path d="M0.8 0.8L10.2 10.2M10.2 0.8L0.8 10.2" stroke="#000" stroke-width="1.7"/></svg>
<div class="a" style="left:789px;top:540px;width:11px;height:1px;background:#a8a8a8"></div>
<div class="a" style="left:926px;top:540px;width:666px;height:1px;background:#a8a8a8"></div>
<div class="t" style="left:806px;top:533.3px">Parametry kombinace</div>
<div class="t" style="left:800.5px;top:558.5px">Název:</div>
<div class="t" style="left:800.5px;top:594px">Druh:</div>
<div class="a" style="left:888px;top:556px;width:326px;height:20px;background:#f0f0f0;border:1px solid #c4c4c4"></div>
<div class="t" style="left:893.5px;top:558.5px;color:#222">G1+G2+Q3+G4+Q5</div>
<div class="a" style="left:1219px;top:556px;width:361px;height:20px;background:#fff;border:1px solid #a9a9a9"></div>
<div class="t" style="left:1224px;top:558.5px">Kombinace 1</div>
<div class="a" style="left:888px;top:591px;width:692px;height:19px;background:#fff;border:1px solid #a9a9a9"></div>
<div class="t" style="left:890.5px;top:593.5px">Základní</div>
<svg class="a" style="left:1566px;top:598px" width="9" height="5"><path d="M0.5 0.5H8.5L4.5 4.5Z" fill="#111"/></svg>
<div class="a" style="left:800px;top:628px;width:781px;height:138px;border:1px solid #0078d7;background:#f0f0f0"></div>
<div class="a" style="left:801px;top:629px;width:779px;height:37px;background:#e1e1e1"></div>
<svg class="a" style="left:0;top:0" width="1919" height="1030"><rect x="801" y="666.5" width="779" height="19" fill="#f0f0f0"/><rect x="1430" y="666.5" width="85.5" height="19" fill="#fff"/><rect x="1450.5" y="669.5" width="13" height="13" fill="#fff" stroke="#111" stroke-width="1.1"/><path d="M1453 676.0L1456 679.0L1461.5 673.5" fill="none" stroke="#222" stroke-width="1.3"/><rect x="1493.5" y="669.5" width="13" height="13" fill="#fff" stroke="#111" stroke-width="1.1"/><rect x="801" y="685.5" width="779" height="19" fill="#f0f0f0"/><rect x="1430" y="685.5" width="85.5" height="19" fill="#fff"/><rect x="1450.5" y="688.5" width="13" height="13" fill="#fff" stroke="#111" stroke-width="1.1"/><path d="M1453 695.0L1456 698.0L1461.5 692.5" fill="none" stroke="#222" stroke-width="1.3"/><rect x="1493.5" y="688.5" width="13" height="13" fill="#fff" stroke="#111" stroke-width="1.1"/><rect x="801" y="704.5" width="779" height="19" fill="#f0f0f0"/><rect x="1430" y="704.5" width="85.5" height="19" fill="#fff"/><rect x="1450.5" y="707.5" width="13" height="13" fill="#fff" stroke="#111" stroke-width="1.1"/><path d="M1453 714.0L1456 717.0L1461.5 711.5" fill="none" stroke="#222" stroke-width="1.3"/><rect x="1493.5" y="707.5" width="13" height="13" fill="#fff" stroke="#111" stroke-width="1.1"/><rect x="801" y="723.5" width="779" height="19" fill="#f0f0f0"/><rect x="1430" y="723.5" width="85.5" height="19" fill="#fff"/><rect x="1450.5" y="726.5" width="13" height="13" fill="#fff" stroke="#111" stroke-width="1.1"/><path d="M1453 733.0L1456 736.0L1461.5 730.5" fill="none" stroke="#222" stroke-width="1.3"/><rect x="1493.5" y="726.5" width="13" height="13" fill="#fff" stroke="#111" stroke-width="1.1"/><rect x="801" y="742.5" width="779" height="19" fill="#d6e3f3"/><rect x="1486" y="742.5" width="29.5" height="19" fill="#e2edf9"/><rect x="1450.5" y="745.5" width="13" height="13" fill="#fff" stroke="#1a6ad0" stroke-width="1"/><rect x="1449.5" y="744.5" width="15" height="15" fill="none" stroke="#000" stroke-width="1" stroke-dasharray="1 1"/><path d="M1453 752.0L1456 755.0L1461.5 749.5" fill="none" stroke="#2a86e6" stroke-width="1.3"/><rect x="1493.5" y="745.5" width="13" height="13" fill="#e2edf9" stroke="#111" stroke-width="1.1"/><path d="M801 647.5H1580M801 666.5H1580M801 685.5H1580M801 704.5H1580M801 723.5H1580M801 742.5H1580M801 761.5H1580M1159.5 647.5V761.5M1249.5 647.5V761.5M1429.5 629V761.5M1485.5 666.5V761.5M1515.5 647.5V761.5" stroke="#acacac" stroke-width="1"/></svg>
<div class="t" style="left:803px;top:669.8px">G1 LC 1 - self weight</div>
<div class="t" style="left:1162px;top:669.8px">Vlastní tíha</div>
<div class="t" style="left:1252px;top:669.8px">Stálé</div>
<div class="t" style="left:1420px;width:157.5px;text-align:right;top:669.8px">1,00</div>
<div class="t" style="left:803px;top:688.8px">G2 LC 2 - permanent - macroelements</div>
<div class="t" style="left:1162px;top:688.8px">Silové</div>
<div class="t" style="left:1252px;top:688.8px">Stálé</div>
<div class="t" style="left:1420px;width:157.5px;text-align:right;top:688.8px">1,00</div>
<div class="t" style="left:803px;top:707.8px">Q3 LC 3 - imposed - macroelements</div>
<div class="t" style="left:1162px;top:707.8px">Silové</div>
<div class="t" style="left:1252px;top:707.8px">Proměnné</div>
<div class="t" style="left:1420px;width:157.5px;text-align:right;top:707.8px">ψ<span style="font-size:9px;position:relative;top:3px">0</span>(1,00)</div>
<div class="t" style="left:803px;top:726.8px">G4 LC 4 - permanent - lines</div>
<div class="t" style="left:1162px;top:726.8px">Silové</div>
<div class="t" style="left:1252px;top:726.8px">Stálé</div>
<div class="t" style="left:1420px;width:157.5px;text-align:right;top:726.8px">1,00</div>
<div class="t" style="left:803px;top:745.8px">Q5 LC 5 - imposed - areal, point</div>
<div class="t" style="left:1162px;top:745.8px">Silové</div>
<div class="t" style="left:1252px;top:745.8px">Proměnné</div>
<div class="t" style="left:1420px;width:157.5px;text-align:right;top:745.8px">ψ<span style="font-size:9px;position:relative;top:3px">0</span>(1,00)</div>
<div class="t" style="left:801px;width:628px;top:632px;text-align:center">Zatěžovací stav</div>
<div class="t" style="left:1430px;width:150px;top:632px;text-align:center">Uplatnění</div>
<div class="t" style="left:801px;width:358px;top:650.5px;text-align:center">Název</div>
<div class="t" style="left:1160px;width:89px;top:650.5px;text-align:center">Kód</div>
<div class="t" style="left:1250px;width:179px;top:650.5px;text-align:center">Typ</div>
<div class="t" style="left:1430px;width:85px;top:650.5px;text-align:center">Uvažovat</div>
<div class="t" style="left:1516px;width:64px;top:650.5px;text-align:center">Součinitel</div>
<div class="t" style="left:800px;top:782.5px;color:#a0a0a0">Mimořádné zatížení:</div>
<div class="a" style="left:946px;top:778px;width:268px;height:20px;background:#f0f0f0;border:1px solid #c4c4c4"></div>
<svg class="a" style="left:1200px;top:786px" width="9" height="5"><path d="M0.5 0.5H8.5L4.5 4.5Z" fill="#888"/></svg>
<div class="t" style="left:1275px;top:782.5px;color:#a0a0a0;letter-spacing:-0.1px">Součinitel pro hlavní proměnné zatížení:</div>
<div class="a" style="left:1511px;top:778px;width:70px;height:20px;background:#f0f0f0;border:1px solid #c4c4c4"></div>
<svg class="a" style="left:1567px;top:786px" width="9" height="5"><path d="M0.5 0.5H8.5L4.5 4.5Z" fill="#888"/></svg>
<div class="a" style="left:1409px;top:815px;width:88px;height:22px;background:#e1e1e1;border:1px solid #adadad"></div>
<div class="a" style="left:1504px;top:815px;width:88px;height:22px;background:#e1e1e1;border:1px solid #adadad"></div>
<div class="t" style="left:1445px;top:819px">Přidat</div>
<div class="t" style="left:1538px;top:819px">Storno</div>
<svg class="a" style="left:0;top:0" width="1919" height="1030"><path d="M1428 826H1438M1433 821V831" stroke="#1a961a" stroke-width="2.8"/><path d="M1522 821L1532 831M1532 821L1522 831" stroke="#d40000" stroke-width="2.6"/></svg>
</body></html>
